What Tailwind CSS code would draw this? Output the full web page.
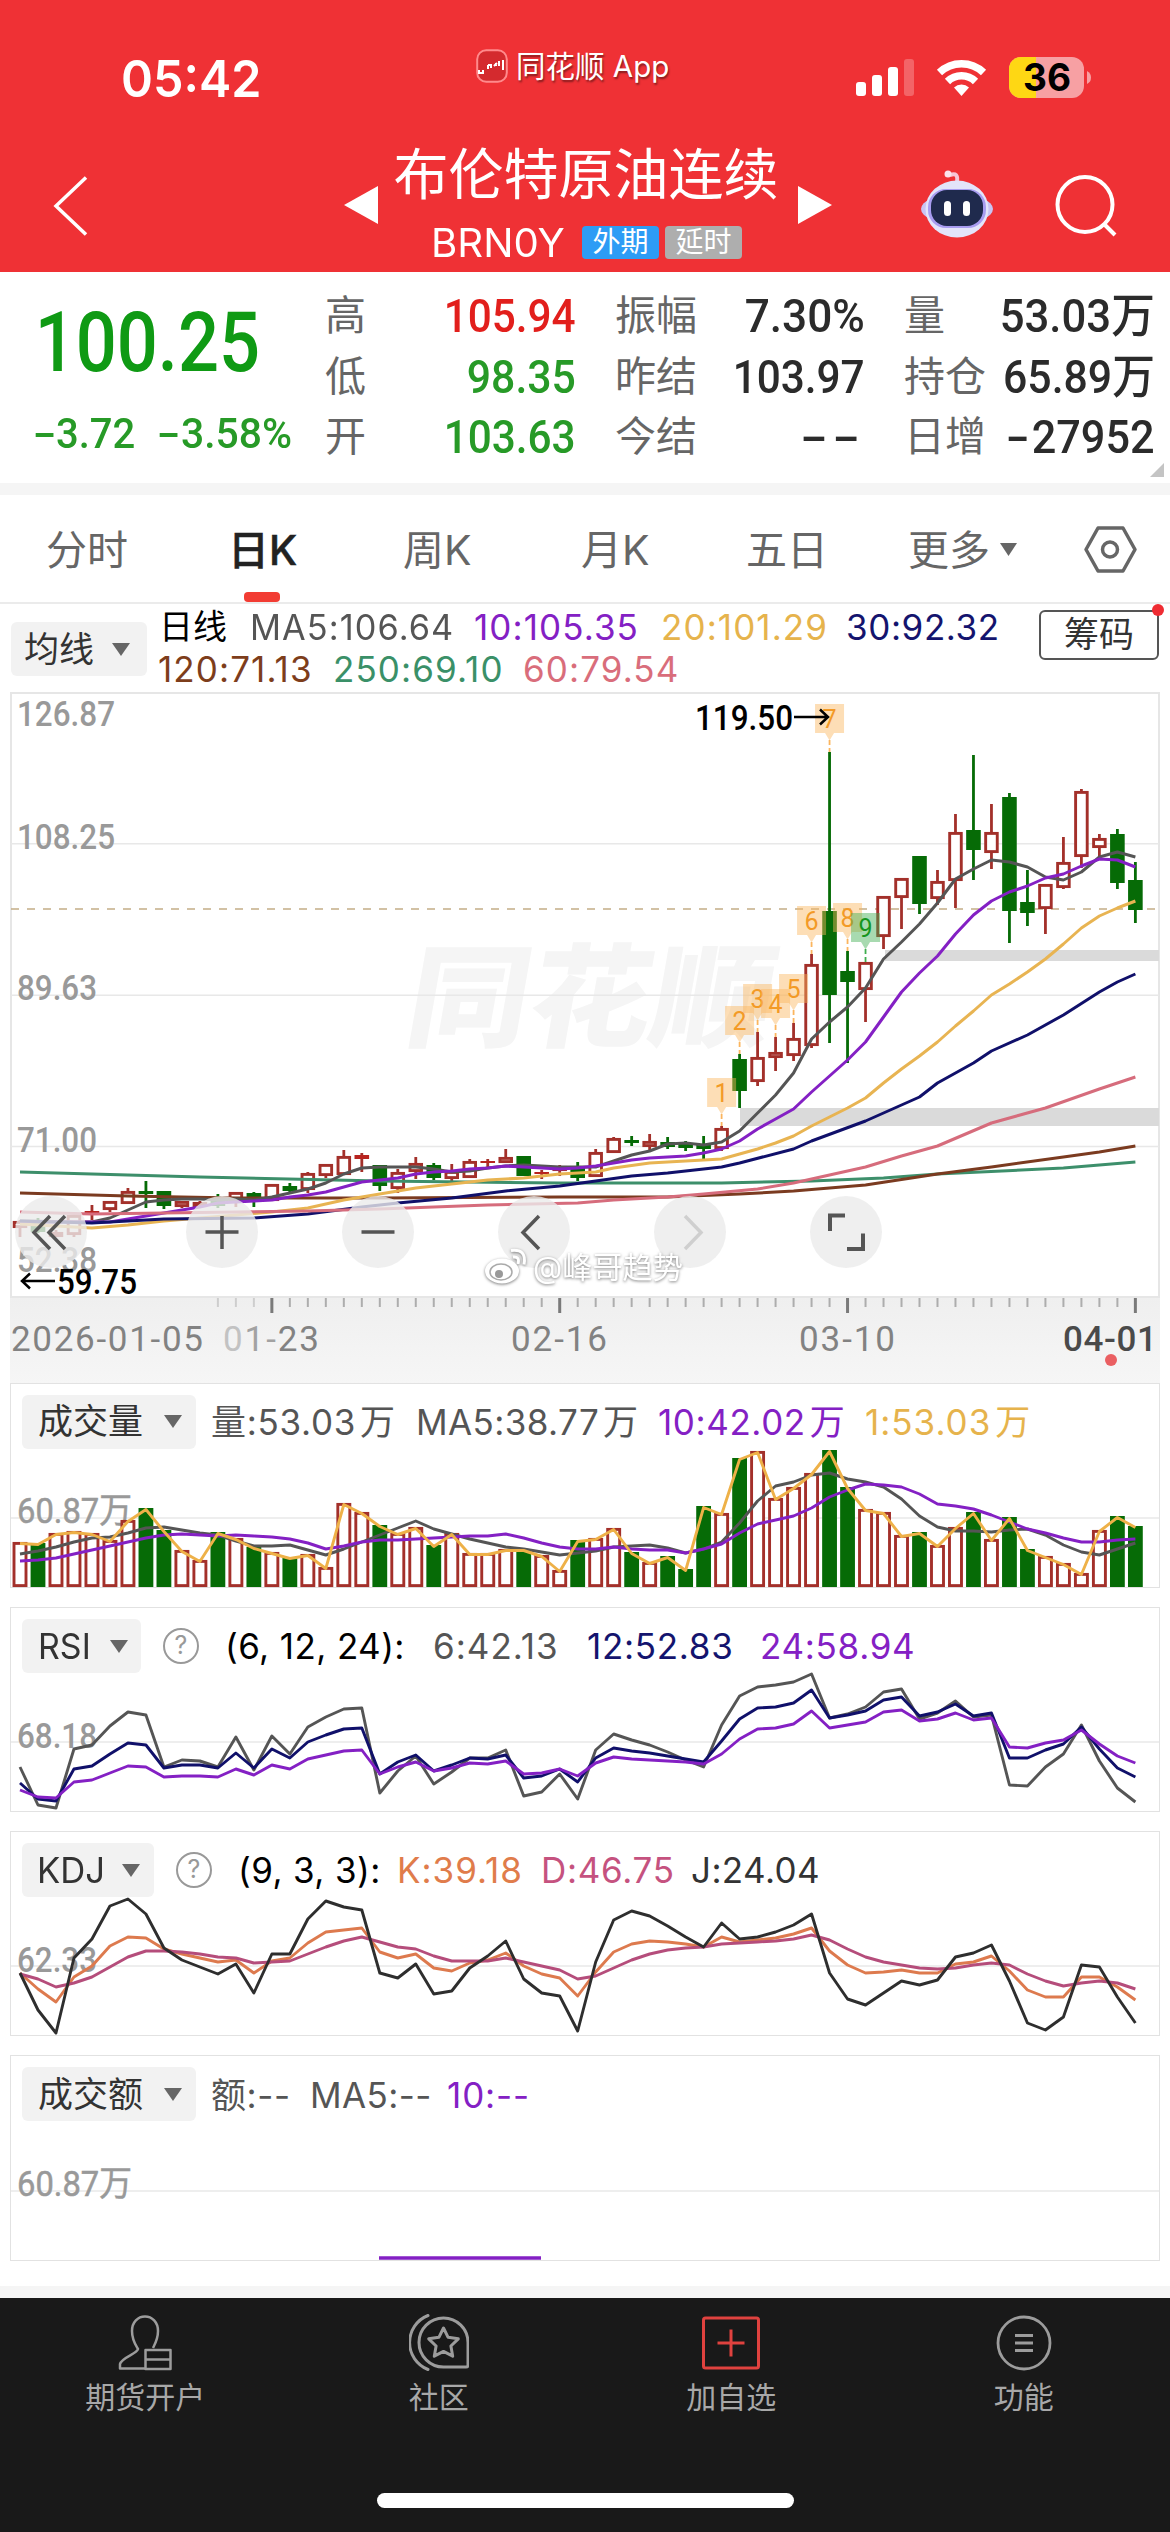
<!DOCTYPE html>
<html lang="zh-CN">
<head>
  <meta charset="UTF-8">
  <meta name="viewport" content="width=device-width, initial-scale=1.0">
  <title>布伦特原油连续</title>
  <script src="https://cdn.jsdelivr.net/npm/@tailwindcss/browser@4"></script>
</head>
<body class="w-[1170px] h-[2532px] overflow-hidden bg-white font-[Inter,'Noto_Sans_CJK_SC',sans-serif] text-[#333]">

  <!-- Header -->
  <header class="h-[272px] bg-[#ef3135] text-white">
    <div class="flex h-[136px] pt-[20px] items-center pl-[121px] pr-[77px]">
      <div class="w-[355px]"><span class="inline-block origin-left scale-x-[.95] text-[51px] font-semibold leading-none">05:42</span></div>
      <div class="flex items-center gap-2 -mt-[24px] w-[380px]">
        <svg class="w-8 h-[34px]" viewBox="0 0 32 34" fill="none">
          <rect x="1.2" y="1.2" width="29.6" height="31.6" rx="9" fill="#d42a2e" stroke="#ff8a8c" stroke-width="2"/>
          <path d="M3 21v3h4v-3M12 16v4M12 16h3v3M18 17l3-3M20 17v-3M23 12v5M27 11v10" stroke="#fff" stroke-width="2"/>
        </svg>
        <span class="text-[29.5px] leading-[44px] whitespace-nowrap [text-shadow:1px_2px_2px_rgba(0,0,0,.45)]">同花顺 App</span>
      </div>
      <svg class="w-[236px] h-[44px]" viewBox="856 56 236 44">
        <rect x="856" y="82" width="10" height="14" rx="3" fill="#fff"/>
        <rect x="872" y="75" width="10" height="21" rx="3" fill="#fff"/>
        <rect x="888" y="67" width="10" height="29" rx="3" fill="#fff"/>
        <rect x="904" y="59" width="10" height="37" rx="3" fill="#fff" opacity=".25"/>
        <g fill="none" stroke="#fff" stroke-width="7.5">
          <path d="M939.500 72.500a32 32 0 0 1 44 0"/>
          <path d="M947.500 81.500a20 20 0 0 1 28 0"/>
        </g>
        <path d="M961.500 96l-7.500-8.500a11 11 0 0 1 15 0z" fill="#fff"/>
        <rect x="1009" y="57" width="75" height="41" rx="12" fill="#f7a0a3"/>
        <path d="M1021 57h15v41h-15a12 12 0 0 1-12-12V69a12 12 0 0 1 12-12z" fill="#fed714"/>
        <path d="M1087 71q4 2 4 6.500t-4 6.500z" fill="#f7a0a3"/>
        <text x="1047" y="91" text-anchor="middle" font-family="Inter" font-weight="700" font-size="38" fill="#000" textLength="48" lengthAdjust="spacingAndGlyphs">36</text>
      </svg>
    </div>

    <div class="flex h-[136px]">
      <svg class="w-[344px] h-full" viewBox="0 136 344 136" fill="none">
        <path d="M86 177.500L56 206l30 28.500" stroke="#fff" stroke-width="3.500"/>
      </svg>
      <svg class="w-[34px] h-full" viewBox="344 136 34 136"><path d="M344 205l34-19v38z" fill="#fff"/></svg>
      <div class="w-[420px]">
        <div class="h-[76px] flex items-center justify-center text-[55px] leading-none pr-[4px]">布伦特原油连续</div>
        <div class="flex items-center pl-[53px] h-[60px]">
          <span class="w-[151px] text-[39px] leading-none"><span class="inline-block origin-left scale-x-[1.03]">BRN0Y</span></span>
          <span class="w-[77px] h-[33px] rounded-[4px] bg-[#2d9cf5] text-[28px] leading-[32px] text-center">外期</span>
          <span class="w-[77px] h-[33px] ml-[6px] rounded-[4px] bg-[#aeaeae] text-[28px] leading-[32px] text-center">延时</span>
        </div>
      </div>
      <svg class="w-[34px] h-full" viewBox="798 136 34 136"><path d="M832 205l-34-19v38z" fill="#fff"/></svg>
      <svg class="w-[338px] h-full" viewBox="832 136 338 136" fill="none">
        <path d="M957 182c1-7-1-9-7-7" stroke="#f7c5d6" stroke-width="4"/>
        <circle cx="948" cy="174" r="3.500" fill="#fbe3ec"/>
        <ellipse cx="957" cy="209" rx="36" ry="15" fill="#c9c4f3"/>
        <ellipse cx="957" cy="209" rx="31.500" ry="28.500" fill="#e3e4fa"/>
        <rect x="928" y="189" width="58" height="39" rx="18" fill="#a89cf0"/>
        <rect x="931" y="190" width="52" height="36" rx="16" fill="#1f2a4d"/>
        <rect x="944" y="201" width="7" height="15" rx="3.500" fill="#fff"/>
        <rect x="963" y="201" width="7" height="15" rx="3.500" fill="#fff"/>
        <circle cx="1085" cy="204.500" r="27.500" stroke="#fff" stroke-width="4"/>
        <path d="M1104 224l11 11" stroke="#fff" stroke-width="4"/>
      </svg>
    </div>
  </header>

  <!-- Quote -->
  <section class="h-[211px] flex relative font-[Roboto,'Noto_Sans_CJK_SC',sans-serif] font-medium">
    <div class="w-[325px] pl-[33px] text-[#279a27]">
      <div class="h-[134px] pt-[29px]"><span class="inline-block origin-left scale-x-[.87] text-[83px] leading-none text-[#0f9a14] pl-[2px]">100.25</span></div>
      <div class="flex text-[43px] leading-[54px]">
        <span class="w-[124px] flex"><span class="w-[23px] origin-left scale-x-[1.6]">-</span><span class="origin-left scale-x-[.93]">3.72</span></span>
        <span class="flex whitespace-nowrap"><span class="w-[24px] origin-left scale-x-[1.6]">-</span><span class="origin-left scale-x-[.95]">3.58%</span></span>
      </div>
    </div>
    <div class="w-[251px] pt-[14px] text-[47px] leading-[60.5px]">
      <div class="flex justify-between"><span class="text-[41px] font-normal text-[#666]">高</span><span class="origin-right scale-x-[.9] text-[#e21f1c]">105.94</span></div>
      <div class="flex justify-between"><span class="text-[41px] font-normal text-[#666]">低</span><span class="origin-right scale-x-[.91] text-[#279a27]">98.35</span></div>
      <div class="flex justify-between"><span class="text-[41px] font-normal text-[#666]">开</span><span class="origin-right scale-x-[.9] text-[#279a27]">103.63</span></div>
    </div>
    <div class="w-[250px] ml-[39px] pt-[14px] text-[47px] leading-[60.5px] text-[#2b2b2b]">
      <div class="flex justify-between"><span class="text-[41px] font-normal text-[#666]">振幅</span><span class="origin-right scale-x-[.94]">7.30%</span></div>
      <div class="flex justify-between"><span class="text-[41px] font-normal text-[#666]">昨结</span><span class="origin-right scale-x-[.9]">103.97</span></div>
      <div class="flex justify-between"><span class="text-[41px] font-normal text-[#666]">今结</span><span class="origin-right scale-x-[1.7] tracking-[3px]">--</span></div>
    </div>
    <div class="w-[251px] ml-[39px] pt-[14px] text-[47px] leading-[60.5px] text-[#2b2b2b]">
      <div class="flex justify-between whitespace-nowrap"><span class="text-[41px] font-normal text-[#666]">量</span><span class="origin-right scale-x-[.93]">53.03万</span></div>
      <div class="flex justify-between whitespace-nowrap"><span class="text-[41px] font-normal text-[#666]">持仓</span><span class="origin-right scale-x-[.91]">65.89万</span></div>
      <div class="flex justify-between whitespace-nowrap"><span class="text-[41px] font-normal text-[#666]">日增</span><span class="flex origin-right scale-x-[.92]"><span class="w-[28px] origin-left scale-x-[1.6]">-</span>27952</span></div>
    </div>
    <svg class="absolute right-[6px] bottom-[6px] w-[14px] h-[14px]" viewBox="0 0 14 14"><path d="M14 0v14H0z" fill="#c4c4c4"/></svg>
  </section>
  <div class="h-3 bg-[#f5f5f5]"></div>

  <!-- Period tabs -->
  <nav class="h-[109px] flex border-b-2 border-[#ebebeb] text-[41px] leading-[110px] text-[#666] pl-[46px] whitespace-nowrap">
    <span class="w-[182px]">分时</span>
    <span class="w-[175px] relative font-medium text-[#222] [-webkit-text-stroke:.5px_#222]">日K<i class="absolute left-[16px] bottom-0 w-9 h-[10px] rounded-[4px] bg-[#f23c33]"></i></span>
    <span class="w-[178px]">周K</span>
    <span class="w-[165px]">月K</span>
    <span class="w-[162px]">五日</span>
    <span class="w-[92px]">更多</span>
    <svg class="w-[140px] h-[107px]" viewBox="1000 495 140 107" fill="none">
      <path d="M1000 543h17l-8.500 13z" fill="#666"/>
      <path d="M1098 528h25l12 21.500-12 21.500h-25l-12-21.500z" stroke="#666" stroke-width="3.500" stroke-linejoin="round"/>
      <circle cx="1110" cy="549.500" r="7.500" stroke="#666" stroke-width="3.500"/>
    </svg>
  </nav>

  <!-- Moving averages legend -->
  <section class="h-[88px] flex relative pl-[11px]">
    <div class="w-[136px] h-[54px] mt-[18px] bg-[#f2f2f2] rounded-[6px] flex items-center pl-[13px] text-[35px]">
      均线<svg class="w-[18px] h-[13px] ml-[18px]" viewBox="0 0 18 13"><path d="M0 0h18l-9 13z" fill="#666"/></svg>
    </div>
    <div class="ml-[12px] pt-[2px] text-[35px] leading-[42px] w-[880px] whitespace-nowrap tracking-[1.1px]">
      <div class="flex">
        <span class="w-[91px] text-black text-[34px] tracking-normal">日线</span>
        <span class="w-[224px] text-[#555]"><span class="inline-block origin-left scale-x-[.98]">MA5:106.64</span></span>
        <span class="w-[187px] text-[#8420c4]">10:105.35</span>
        <span class="w-[185px] text-[#e6b34c]">20:101.29</span>
        <span class="text-[#14146e] tracking-[.6px]">30:92.32</span>
      </div>
      <div class="flex">
        <span class="w-[175px] -ml-px text-[#7d3d1b]">120:71.13</span>
        <span class="w-[190px] text-[#3a9068]">250:69.10</span>
        <span class="text-[#d96d7b]">60:79.54</span>
      </div>
    </div>
    <div class="w-[120px] h-[50px] mt-[6px] border-2 border-[#555] rounded-[6px] text-[35px] leading-[45px] text-center relative">筹码
      <i class="absolute -right-[7px] -top-[8px] w-3 h-3 rounded-full bg-[#ef2c33]"></i>
    </div>
  </section>

  <!-- Candlestick chart -->
  <section class="mx-[10px] w-[1150px] h-[606px] border-2 border-[#e6e6e6]">
    <svg id="kline" class="w-[1146px] h-[602px] overflow-visible" viewBox="12 694 1146 602">
      <text x="402" y="1038" transform="translate(183 0) skewX(-10)" font-family="'Noto Sans CJK SC'" font-weight="900" font-size="112" fill="#f5f5f5" textLength="366" lengthAdjust="spacingAndGlyphs">同花顺</text>
      <path d="M11 843.700h1148M11 995.300h1148M11 1146.500h1148" stroke="#e8e8e8" stroke-width="1.500"/>
      <rect x="885" y="950" width="274" height="11" fill="#dadada"/>
      <rect x="740" y="1108" width="419" height="18" fill="#dadada"/>
      <path d="M11 909h1148" stroke="#c4ad86" stroke-width="1.500" stroke-dasharray="8 8"/>
      <g font-family="Roboto" font-weight="500" font-size="35" fill="#999">
        <text x="17" y="726" textLength="98" lengthAdjust="spacingAndGlyphs">126.87</text>
        <text x="17" y="849" textLength="98" lengthAdjust="spacingAndGlyphs">108.25</text>
        <text x="17" y="1000" textLength="80" lengthAdjust="spacingAndGlyphs">89.63</text>
        <text x="17" y="1152" textLength="80" lengthAdjust="spacingAndGlyphs">71.00</text>
        <text x="17" y="1272" textLength="80" lengthAdjust="spacingAndGlyphs">52.38</text>
      </g>
      <g id="candles"></g>
      <g id="lines" fill="none" stroke-width="3" stroke-linejoin="round"></g>
      <g id="marks" font-family="Roboto" font-size="25" text-anchor="middle"></g>
      <g font-family="Roboto" font-weight="500" font-size="35" fill="#000">
        <text x="695" y="730" textLength="98" lengthAdjust="spacingAndGlyphs">119.50</text>
        <text x="57" y="1294" textLength="80" lengthAdjust="spacingAndGlyphs">59.75</text>
      </g>
      <path d="M794 717h34M820 709.500l8 7.500-8 7.500M55 1281H22M30 1273.500l-8 7.500 8 7.500" fill="none" stroke="#000" stroke-width="2.500"/>
      <g fill="#ebebeb" fill-opacity=".8">
        <circle cx="51" cy="1232" r="36"/><circle cx="222" cy="1232" r="36"/><circle cx="378" cy="1232" r="36"/>
        <circle cx="534" cy="1232" r="36"/><circle cx="690" cy="1232" r="36"/><circle cx="846" cy="1232" r="36"/>
      </g>
      <g fill="none" stroke="#555" stroke-width="3.500">
        <path d="M50 1216l-16 16.500 16 16.500M65 1216l-16 16.500 16 16.500"/>
        <path d="M205.500 1232h33M222 1216v33M361.500 1232h33M539 1216l-16 16.500 16 16.500"/>
        <path d="M685 1216l16 16.500-16 16.500" stroke="#cfcfcf"/>
        <path d="M845 1215.500h-15v15.500M847 1249h16v-15.500" stroke-width="4"/>
      </g>
      <!-- Weibo signature -->
      <g class="[filter:drop-shadow(0_1px_1.5px_rgba(0,0,0,.5))]">
        <ellipse cx="502" cy="1271" rx="17" ry="12.500" fill="#fff"/>
        <ellipse cx="501" cy="1272" rx="11" ry="8" fill="none" stroke="#aaa" stroke-width="1.500"/>
        <circle cx="499" cy="1274" r="4" fill="#999"/>
        <path d="M513 1257q7-1 5 7M511 1250.500q16-2 13 14" fill="none" stroke="#fff" stroke-width="3"/>
        <text x="533" y="1278" font-size="30" fill="#fff" font-family="Inter,'Noto Sans CJK SC'" textLength="150" lengthAdjust="spacingAndGlyphs">@峰哥趋势</text>
      </g>
    </svg>
  </section>

  <!-- Time axis -->
  <div class="mx-[10px] h-[85px] bg-linear-to-b from-[#efefef] to-[#f6f6f6]">
    <svg id="axis" class="w-[1150px] h-[85px] block" viewBox="10 1298 1150 85">
      <g font-family="Roboto" font-weight="400" font-size="35" fill="#828282">
        <text x="11" y="1351" textLength="192">2026-01-05</text>
        <text x="223" y="1351" textLength="96"><tspan fill="#c2c2c2">0</tspan><tspan fill="#a2a2a2">1-</tspan>23</text>
        <text x="511" y="1351" textLength="96">02-16</text>
        <text x="799" y="1351" textLength="96">03-10</text>
        <text x="1063" y="1351" textLength="94" fill="#4a4a4a" font-weight="500">04-01</text>
      </g>
      <circle cx="1111" cy="1360" r="6" fill="#ea5f62"/>
    </svg>
  </div>

  <!-- Indicator panels -->
  <section class="mx-[10px] h-[205px] border border-[#e2e2e2]">
    <div class="h-[66px] flex items-center pl-[11px] text-[35px] text-[#555] whitespace-nowrap leading-none pt-[9px]">
      <div class="w-[174px] h-[54px] bg-[#f2f2f2] rounded-[6px] flex items-center pl-[16px] text-[#333]">成交量<svg class="w-[18px] h-[13px] ml-[21px]" viewBox="0 0 18 13"><path d="M0 0h18l-9 13z" fill="#666"/></svg></div>
      <span class="ml-[15px] mt-[2px] w-[205px] tracking-[.7px]">量:53.03<span class="ml-1">万</span></span>
      <span class="w-[242px] mt-[2px] tracking-[.4px]">MA5:38.77<span class="ml-1">万</span></span>
      <span class="w-[207px] mt-[2px] tracking-[.6px] text-[#8420c4]">10:42.02<span class="ml-1">万</span></span>
      <span class="mt-[2px] tracking-[1px] text-[#e6b34c]">1:53.03<span class="ml-1">万</span></span>
    </div>
    <svg id="vol" class="w-[1148px] h-[137px] overflow-visible" viewBox="11 0 1148 137">
      <path d="M11 68h1148" stroke="#e8e8e8" stroke-width="1.500"/>
      <text x="17" y="73" font-family="Roboto,'Noto Sans CJK SC'" font-size="35" fill="#999" stroke="#999" stroke-width=".5" textLength="115" lengthAdjust="spacingAndGlyphs">60.87万</text>
    </svg>
  </section>

  <section class="mx-[10px] mt-[19px] h-[205px] border border-[#e2e2e2]">
    <div class="h-[66px] flex items-center pl-[11px] text-[35px] text-[#555] whitespace-nowrap leading-none pt-[10px]">
      <div class="w-[119px] h-[54px] bg-[#f2f2f2] rounded-[6px] flex items-center pl-[16px] text-[#333]"><span class="w-[72px]"><span class="inline-block origin-left scale-x-[.97]">RSI</span></span><svg class="w-[18px] h-[13px]" viewBox="0 0 18 13"><path d="M0 0h18l-9 13z" fill="#666"/></svg></div>
      <span class="ml-[22px] w-9 h-9 rounded-full border-[2.5px] border-[#999] text-[#999] text-[25px] leading-[31px] text-center">?</span>
      <span class="ml-[26px] w-[208px] text-black tracking-[.4px]">(6, 12, 24):</span>
      <span class="w-[154px] tracking-[1px]">6:42.13</span>
      <span class="w-[173px] tracking-[.7px] text-[#14146e]">12:52.83</span>
      <span class="text-[#8420c4] tracking-[.7px]">24:58.94</span>
    </div>
    <svg id="rsi" class="w-[1148px] h-[137px] overflow-visible" viewBox="11 0 1148 137">
      <path d="M11 68h1148" stroke="#e8e8e8" stroke-width="1.500"/>
      <text x="17" y="74" font-family="Roboto" font-weight="500" font-size="35" fill="#999" textLength="80" lengthAdjust="spacingAndGlyphs">68.18</text>
    </svg>
  </section>

  <section class="mx-[10px] mt-[19px] h-[205px] border border-[#e2e2e2]">
    <div class="h-[66px] flex items-center pl-[11px] text-[35px] text-[#555] whitespace-nowrap leading-none pt-[10px]">
      <div class="w-[132px] h-[54px] bg-[#f2f2f2] rounded-[6px] flex items-center pl-[15px] text-[#333]"><span class="w-[85px]"><span class="inline-block origin-left scale-x-[.99]">KDJ</span></span><svg class="w-[18px] h-[13px]" viewBox="0 0 18 13"><path d="M0 0h18l-9 13z" fill="#666"/></svg></div>
      <span class="ml-[22px] w-9 h-9 rounded-full border-[2.5px] border-[#999] text-[#999] text-[25px] leading-[31px] text-center">?</span>
      <span class="ml-[26px] w-[159px] text-black tracking-[.4px]">(9, 3, 3):</span>
      <span class="w-[144px] tracking-[1px] text-[#e07c4b]">K:39.18</span>
      <span class="w-[150px] tracking-[.7px] text-[#c5527f]">D:46.75</span>
      <span class="text-[#333] tracking-[.4px]">J:24.04</span>
    </div>
    <svg id="kdj" class="w-[1148px] h-[137px] overflow-visible" viewBox="11 0 1148 137">
      <path d="M11 68h1148" stroke="#e8e8e8" stroke-width="1.500"/>
      <text x="17" y="74" font-family="Roboto" font-weight="500" font-size="35" fill="#999" textLength="80" lengthAdjust="spacingAndGlyphs">62.33</text>
    </svg>
  </section>

  <section class="mx-[10px] mt-[19px] h-[206px] border border-[#e2e2e2]">
    <div class="h-[66px] flex items-center pl-[11px] text-[35px] text-[#555] whitespace-nowrap leading-none pt-[10px]">
      <div class="w-[174px] h-[54px] bg-[#f2f2f2] rounded-[6px] flex items-center pl-[16px] text-[#333]">成交额<svg class="w-[18px] h-[13px] ml-[21px]" viewBox="0 0 18 13"><path d="M0 0h18l-9 13z" fill="#666"/></svg></div>
      <span class="ml-[15px] mt-[2px] w-[99px] tracking-[.6px]">额:--</span>
      <span class="w-[137px] mt-[2px] tracking-[.4px]">MA5:--</span>
      <span class="mt-[2px] tracking-[.9px] text-[#8420c4]">10:--</span>
    </div>
    <svg class="w-[1148px] h-[138px] overflow-visible" viewBox="11 0 1148 138">
      <path d="M11 69h1148" stroke="#e8e8e8" stroke-width="1.500"/>
      <text x="17" y="74" font-family="Roboto,'Noto Sans CJK SC'" font-size="35" fill="#999" stroke="#999" stroke-width=".5" textLength="115" lengthAdjust="spacingAndGlyphs">60.87万</text>
      <path d="M379 136h162" stroke="#8420c4" stroke-width="3.500"/>
    </svg>
  </section>

  <div class="mt-[25px] h-3 bg-[#f5f5f5]"></div>

  <!-- Bottom bar -->
  <footer class="h-[234px] bg-[#191919] text-[#a8a8a8] text-[30px] leading-none pt-[14px]">
    <div class="grid grid-cols-4">
      <div class="flex flex-col items-center gap-[10px] pr-[2px]">
        <svg class="w-[60px] h-[60px]" viewBox="0 0 60 60" fill="none" stroke="#9c9c9c" stroke-width="2.500" stroke-linejoin="round">
          <path d="M38 36c2-4 5-9 5-17 0-9-6-14.500-13-14.500S17 10 17 19c0 9 3 13 6 18-1 5-16 8-18 15v4.500h25"/>
          <rect x="30.500" y="38" width="25" height="19"/><path d="M30.500 47.500h25"/>
        </svg>期货开户
      </div>
      <div class="flex flex-col items-center gap-[10px]">
        <svg class="w-[60px] h-[60px]" viewBox="0 0 60 60" fill="none" stroke="#9c9c9c" stroke-width="3" stroke-linecap="round" stroke-linejoin="round">
          <path d="M34.500 6a24.500 24.500 0 1 0 0 49H57a2 2 0 0 0 2-2V30.500A24.500 24.500 0 0 0 34.500 6z"/>
          <path d="M19 3.500a29 29 0 0 0 0 54"/>
          <path d="M34.500 16l4.600 9.300 10.200 1.500-7.400 7.200 1.800 10.200-9.200-4.800-9.200 4.800 1.800-10.200-7.400-7.200 10.200-1.500z"/>
        </svg>社区
      </div>
      <div class="flex flex-col items-center gap-[10px]">
        <svg class="w-[60px] h-[60px]" viewBox="0 0 60 60" fill="none" stroke="#e0423f" stroke-width="3">
          <rect x="2.500" y="6" width="55" height="50" rx="2"/><path d="M30 17.500v27M16.500 31h27"/>
        </svg>加自选
      </div>
      <div class="flex flex-col items-center gap-[10px]">
        <svg class="w-[60px] h-[60px]" viewBox="0 0 60 60" fill="none" stroke="#9c9c9c" stroke-width="2.800">
          <circle cx="30" cy="31" r="26"/><path d="M21 23.500h18M21 31h18M21 38.500h18"/>
        </svg>功能
      </div>
    </div>
    <div class="w-[417px] h-[15px] rounded-full bg-white mx-auto mt-[81px]"></div>
  </footer>

  <script>
    const NS = 'http://www.w3.org/2000/svg';
    const RED = '#a3302a', GREEN = '#066b06';
    const xAt = i => 20 + i * 17.99;

    function add(parent, tag, attrs, text) {
      const el = document.createElementNS(NS, tag);
      for (const k in attrs) el.setAttribute(k, attrs[k]);
      if (text) el.textContent = text;
      parent.appendChild(el);
      return el;
    }

    // [up/down, high, body top, body bottom, low]
    const candles = [
      ['r',1220,1221,1228,1237],['g',1218,1223,1232,1233],['r',1230,1232,1237,1237],['r',1213,1215,1235,1237],
      ['r',1205,1211,1215,1220],['r',1201,1201,1210,1212],['r',1188,1191,1204,1204],['g',1181,1191,1194,1208],
      ['g',1191,1191,1206,1209],['r',1201,1201,1207,1208],['r',1201,1202,1207,1207],['g',1194,1200,1206,1208],
      ['r',1192,1192,1201,1207],['g',1192,1193,1202,1207],['r',1184,1184,1201,1201],['g',1183,1186,1191,1193],
      ['r',1172,1173,1190,1193],['r',1164,1164,1176,1178],['r',1150,1156,1175,1175],['r',1153,1155,1159,1172],
      ['g',1165,1165,1186,1191],['r',1169,1172,1189,1193],['r',1157,1163,1172,1179],['g',1163,1165,1178,1180],
      ['r',1164,1171,1179,1181],['r',1159,1161,1178,1178],['r',1159,1161,1163,1167],['r',1149,1157,1163,1163],
      ['g',1156,1156,1176,1176],['r',1170,1172,1174,1179],['r',1165,1166,1171,1176],['g',1162,1166,1178,1181],
      ['r',1149,1152,1177,1177],['r',1137,1138,1153,1153],['g',1136,1140,1143,1146],['r',1134,1141,1147,1151],
      ['g',1137,1142,1147,1149],['g',1141,1143,1148,1151],['g',1136,1145,1149,1159],['r',1126,1128,1149,1151],
      ['g',1054,1059,1091,1108],['r',1032,1057,1082,1086],['r',1037,1052,1058,1071],['r',1023,1038,1056,1061],
      ['r',954,964,1046,1048],['g',752,911,995,1043],['g',951,971,982,1063],['r',962,962,990,1022],
      ['r',896,896,937,949],['r',878,878,898,929],['g',856,856,904,914],['r',870,881,899,905],
      ['r',814,832,881,908],['g',755,830,850,880],['r',804,832,853,869],['g',793,797,911,943],
      ['g',870,902,913,926],['r',884,884,909,934],['r',837,862,888,889],['r',789,791,857,868],
      ['r',834,838,848,857],['g',829,834,883,889],['g',862,880,910,923]
    ];

    const candleLayer = document.getElementById('candles');
    candles.forEach(([dir, high, top, bottom, low], i) => {
      const x = xAt(i);
      const color = dir === 'r' ? RED : GREEN;
      add(candleLayer, 'path', { d: `M${x} ${high}V${top}M${x} ${bottom}V${low}`, stroke: color, 'stroke-width': 2.8 });
      if (dir === 'g' || bottom - top < 5) {
        add(candleLayer, 'rect', { x: x - 7.3, y: top, width: 14.6, height: bottom - top, fill: dir === 'g' ? GREEN : '#b8241f' });
      } else {
        add(candleLayer, 'rect', { x: x - 5.8, y: top + 1.4, width: 11.6, height: bottom - top - 2.8, fill: '#fff', stroke: color, 'stroke-width': 2.9 });
      }
    });

    // Moving averages as [bar index, y]
    const averages = [
      ['#3d8f6b', [[0,1172],[10,1177],[20,1181],[30,1183],[39,1183],[44,1181],[48,1178],[51,1174],[58,1168],[62,1162]]],
      ['#7b3b20', [[0,1193],[6,1196],[12,1198],[20,1198],[30,1197],[36,1197],[40,1194],[43,1191],[47,1185],[51,1174],[54,1167],[58,1157],[60,1152],[62,1146]]],
      ['#555', [[0,1221],[4,1222],[5,1218],[6,1210],[7,1202],[8,1200],[9,1199],[10,1199],[11,1200],[12,1199],[13,1200],[14,1197],[15,1193],[16,1189],[17,1183],[18,1174],[19,1168],[20,1167],[21,1167],[22,1167],[23,1169],[24,1172],[25,1171],[26,1168],[27,1166],[28,1165],[29,1166],[30,1167],[31,1167],[32,1167],[33,1161],[34,1155],[35,1151],[36,1144],[37,1143],[38,1145],[39,1142],[40,1131],[41,1113],[42,1095],[43,1073],[44,1039],[45,1022],[46,1007],[47,988],[48,959],[49,942],[50,924],[51,903],[52,879],[53,869],[54,860],[55,862],[56,867],[57,877],[58,880],[59,872],[60,857],[61,852],[62,857]]],
      ['#8420c4', [[0,1222],[4,1222],[5,1222],[6,1219],[7,1216],[8,1213],[9,1210],[10,1207],[11,1203],[12,1202],[13,1201],[14,1200],[15,1197],[16,1195],[17,1192],[18,1187],[19,1182],[20,1180],[21,1178],[22,1174],[23,1172],[24,1171],[25,1169],[26,1168],[27,1166],[28,1167],[29,1168],[30,1169],[31,1168],[32,1166],[33,1163],[34,1160],[35,1158],[36,1157],[37,1156],[38,1153],[39,1149],[40,1141],[41,1129],[42,1119],[43,1109],[44,1092],[45,1076],[46,1060],[47,1042],[48,1017],[49,992],[50,973],[51,956],[52,934],[53,915],[54,901],[55,892],[56,886],[57,878],[58,874],[59,866],[60,859],[61,860],[62,867]]],
      ['#e8b452', [[0,1224],[4,1228],[6,1225],[8,1221],[10,1218],[12,1215],[14,1212],[16,1208],[18,1200],[20,1194],[22,1188],[24,1184],[26,1180],[28,1178],[30,1174],[32,1172],[33,1168],[35,1163],[37,1161],[39,1159],[40,1154],[41,1149],[42,1143],[43,1136],[44,1126],[45,1117],[46,1108],[47,1098],[48,1083],[49,1069],[50,1056],[51,1042],[52,1026],[53,1011],[54,995],[55,984],[56,972],[57,959],[58,944],[59,928],[60,916],[61,908],[62,901]]],
      ['#10106a', [[0,1221],[4,1223],[8,1219],[13,1218],[16,1214],[19,1207],[21,1203],[24,1198],[27,1191],[30,1186],[32,1181],[34,1176],[36,1173],[38,1169],[39,1167],[40,1163],[43,1149],[44,1141],[47,1121],[50,1097],[51,1083],[53,1063],[54,1051],[56,1035],[58,1015],[60,992],[61,982],[62,974]]],
      ['#d66c7c', [[0,1212],[4,1214],[8,1213],[16,1211],[20,1209],[26,1205],[31,1203],[33,1200],[36,1197],[38,1194],[41,1189],[43,1183],[45,1175],[47,1167],[49,1156],[51,1146],[54,1123],[57,1108],[60,1089],[62,1077]]]
    ];
    const lineLayer = document.getElementById('lines');
    averages.forEach(([stroke, pts]) => {
      add(lineLayer, 'polyline', { points: pts.map(([i, y]) => `${xAt(i)},${y}`).join(' '), stroke });
    });

    // Nine-turn markers: [label, bar index, box top]
    const marks = [[1,39,1078],[2,40,1006],[3,41,984],[4,42,989],[5,43,974],[6,44,906],[7,45,704],[8,46,903],[9,47,913]];
    const markLayer = document.getElementById('marks');
    marks.forEach(([n, i, y]) => {
      const x = xAt(i);
      const fill = n === 9 ? '#3fae4f' : '#fbb55e';
      add(markLayer, 'path', { d: `M${x} ${y + 36}V${candles[i][1]}`, stroke: fill, 'stroke-width': 1.8, 'stroke-dasharray': '5 3' });
      add(markLayer, 'path', { d: `M${x - 14.5} ${y}h29v29h-10l-4.500 7.500-4.500-7.500h-10z`, fill, opacity: .45 });
      add(markLayer, 'text', { x, y: y + 24, fill: n === 9 ? '#17961f' : '#f39a26' }, String(n));
    });

    const axis = document.getElementById('axis');
    for (let i = 11; i < 63; i++) {
      const major = (i - 14) % 16 === 0;
      add(axis, 'path', {
        d: `M${xAt(i)} 1298v${major ? 15 : 9}`,
        stroke: major ? '#7a7a7a' : '#adadad',
        'stroke-width': major ? 3 : 2,
        opacity: i < 14 ? .5 : 1
      });
    }

    // Sub charts hold heights above the panel's bottom edge
    const H = 137;
    function line(id, stroke, data) {
      add(document.getElementById(id), 'polyline', {
        points: data.map((h, i) => `${xAt(i)},${H - h}`).join(' '),
        fill: 'none', stroke, 'stroke-width': 2.9, 'stroke-linejoin': 'round'
      });
    }

    const volume = [45,44,54,56,54,47,67,79,57,37,27,55,49,40,35,30,33,20,84,75,62,54,60,42,54,34,34,38,38,32,17,47,49,59,35,25,31,18,81,74,129,136,89,100,114,137,100,78,75,52,55,42,60,75,48,70,38,31,24,14,57,71,61];
    volume.forEach((h, i) => {
      const x = xAt(i);
      const svg = document.getElementById('vol');
      if (candles[i][0] === 'g') {
        add(svg, 'rect', { x: x - 7.4, y: H - h, width: 14.8, height: h, fill: GREEN });
      } else {
        add(svg, 'rect', { x: x - 6, y: H - h + 1.4, width: 12, height: h - 2.8, fill: '#fff', stroke: RED, 'stroke-width': 2.9 });
      }
    });
    line('vol', '#555', [33,36,40,45,49,50,54,59,60,57,54,52,46,41,41,42,37,32,38,45,52,59,66,58,53,48,44,40,38,35,32,34,36,40,41,42,39,34,38,45,64,86,101,105,112,114,108,105,100,88,71,60,56,56,55,57,58,52,42,35,32,38,44]);
    line('vol', '#8420c4', [26,27,29,33,37,41,45,49,52,53,52,51,52,51,50,48,44,38,41,45,47,47,48,49,50,51,51,53,49,44,40,38,38,40,38,37,37,34,38,43,54,63,67,71,79,90,97,103,102,100,93,83,81,78,72,65,58,54,49,45,45,47,48]);
    line('vol', '#eeb148', volume.map(h => h - 1.5));

    line('rsi', '#555', [44,6,3,62,66,85,99,96,44,51,50,44,74,41,75,57,84,94,102,103,18,40,55,27,39,53,53,61,15,19,37,12,61,77,71,66,59,51,44,86,115,124,126,129,137,93,97,104,119,122,92,98,110,94,96,26,25,44,57,86,50,23,9]);
    line('rsi', '#10106a', [28,12,10,42,45,57,68,66,43,46,46,43,58,43,62,53,69,76,82,83,37,49,56,40,46,53,52,56,33,35,42,29,53,63,60,58,55,52,49,70,92,103,104,108,121,93,96,100,111,114,95,99,107,95,98,53,53,61,67,84,62,43,34]);
    line('rsi', '#8420c4', [21,14,13,29,31,38,45,44,34,35,35,34,42,36,46,42,52,56,60,61,37,44,49,40,43,48,47,50,37,38,42,35,48,54,52,51,50,49,47,57,72,82,83,87,100,83,86,89,99,101,90,92,98,91,93,64,63,68,71,81,67,55,48]);

    line('kdj', '#dd7a4e', [62,46,33,58,69,89,98,97,86,81,77,73,75,62,74,77,92,103,105,107,83,77,81,67,64,72,75,82,69,61,57,39,63,83,91,94,93,91,88,98,93,95,97,101,107,84,70,62,63,65,62,62,71,73,79,64,45,38,38,58,58,48,35]);
    line('kdj', '#b54d7b', [61,56,48,52,58,68,78,84,84,83,81,78,77,72,73,74,81,88,94,98,93,88,86,79,74,74,74,77,73,69,65,56,59,67,75,81,85,87,88,91,92,93,94,96,100,95,86,78,73,70,67,66,67,70,72,70,61,54,49,52,54,52,46]);
    line('kdj', '#2e2e2e', [62,25,2,77,96,129,136,121,87,75,68,61,71,42,81,81,116,134,128,125,62,57,71,41,44,67,79,94,56,42,39,4,73,115,124,119,109,98,88,112,96,98,103,110,121,62,36,30,42,54,50,55,78,82,90,54,12,5,18,70,68,38,12]);
  </script>
</body>
</html>
